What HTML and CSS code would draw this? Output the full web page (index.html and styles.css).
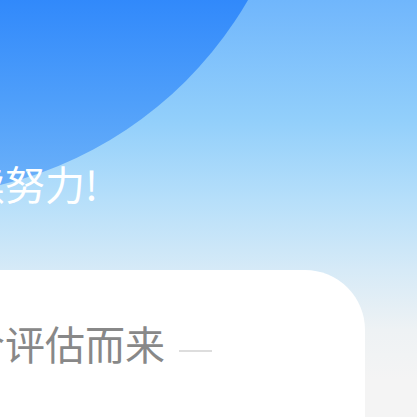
FILE: index.html
```html
<!DOCTYPE html>
<html lang="zh">
<head>
<meta charset="utf-8">
<link rel="stylesheet" href="styles.css">
</head>
<body>
<div class="page">
  <div class="blob"></div>
  <div class="hero">
    <p class="slogan">续努力!</p>
  </div>
  <div class="card">
    <p class="note"><span class="note-text">合评估而来</span><span class="dash"></span></p>
  </div>
</div>
</body>
</html>
```
FILE: styles.css
```css
html, body {
  margin: 0;
  padding: 0;
}
body {
  font-family: "Noto Sans CJK SC", "Noto Sans", sans-serif;
}
.page {
  position: relative;
  width: 417px;
  height: 417px;
  overflow: hidden;
  display: flex;
  flex-direction: column;
  background: linear-gradient(180deg, #70b6fc 0px, #92cffb 120px, #b6dffa 200px, #d6eaf7 270px, #eef2f4 330px, #f4f4f4 380px, #f4f4f4 417px);
}
.blob {
  position: absolute;
  left: -485px;
  top: -590px;
  width: 786px;
  height: 786px;
  border-radius: 50%;
  background: linear-gradient(180deg, #1f7cf8 0%, #3189fb 75%, #4f9ffa 88%, #6fb3f9 100%);
}
.hero {
  position: relative;
  padding-top: 156px;
  height: 114px;
  box-sizing: content-box;
}
.slogan {
  margin: 0 0 0 -35px;
  font-size: 40px;
  line-height: 54px;
  color: #ffffff;
  white-space: nowrap;
}
.card {
  position: relative;
  flex: 1;
  width: 365px;
  background: #ffffff;
  border-top-right-radius: 60px;
}
.note {
  margin: 0 0 0 -35px;
  padding-top: 46px;
  display: flex;
  align-items: center;
  white-space: nowrap;
}
.note-text {
  font-size: 40px;
  line-height: 54px;
  color: #888888;
}
.dash {
  width: 33px;
  height: 2px;
  margin-left: 14px;
  margin-top: 16px;
  background: #dddddd;
}
```
